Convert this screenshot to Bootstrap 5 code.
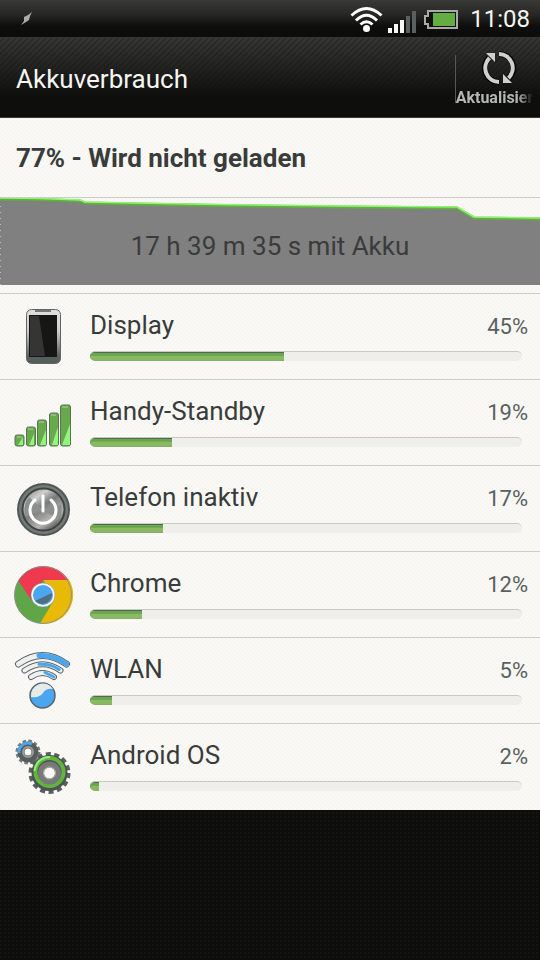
<!DOCTYPE html>
<html lang="de">
<head>
<meta charset="utf-8">
<meta name="viewport" content="width=device-width, initial-scale=1">
<title>Akkuverbrauch</title>
<link rel="stylesheet" href="https://cdn.jsdelivr.net/npm/bootstrap@5.3.0/dist/css/bootstrap.min.css">
<style>
body{font-family:Roboto,"Liberation Sans",sans-serif;color:#393c3b;font-size:26px;line-height:32px;
 background:radial-gradient(circle at 1px 1px,#141413 1px,transparent 1px) 0 0/4px 4px,#0d0d0c}
.statusbar{height:38px;padding:0 10px 0 20px;color:#f6f6f2;background:linear-gradient(#393938,#262625 40%,#0e0e0d 70%,#0c0c0b);border-bottom:1px solid #343433}
.clock{font-size:24px;margin-left:12px}
.titlebar{height:80px;padding:2px 8px 0 16px;color:#f6f6f2;border-bottom:1px solid #3a3a39;
 background:linear-gradient(transparent,#0e0e0d 75%),linear-gradient(135deg,#373736 25%,#2e2e2d 25% 50%,#373736 50% 75%,#2e2e2d 75%) 0 0/6px 6px}
.heading{font-size:26px;line-height:32px}
.refresh{width:77px;height:58px;font-size:16px;line-height:20px;font-weight:700;color:#b5b7b6;border:0;padding:0 0 0 2px;background:linear-gradient(#555857,#555857) 0 center/1px 48px no-repeat}
.refresh svg{flex:none;margin-left:8px}
.fade-end{-webkit-mask-image:linear-gradient(90deg,#000 80%,transparent);mask-image:linear-gradient(90deg,#000 80%,transparent)}
.paper{background:linear-gradient(135deg,#fbfaf7 25%,#f6f5f1 25% 50%,#fbfaf7 50% 75%,#f6f5f1 75%) 0 0/4px 4px}
.line{border-bottom:1px solid #cccdc9}
.summary{padding:24px 16px 23px}
.history{height:96px;padding-bottom:8px}
.usage{height:86px;background:none;color:inherit;border:0;border-bottom:1px solid #cccdc9;padding:0 12px 0 0}
.pic{width:90px;flex:none;padding:0 0 0 12px}
.share{font-size:22px;line-height:36px;color:#5a605f}
.meter{height:10px;margin:6px 6px 0 0;border-radius:5px;background:#eeefeb;border-top:1px solid #c8cac6}
.meter .progress-bar{background:linear-gradient(#67a84a 0 30%,#8ab864 40% 90%,#7c9c6c);border-top:1px solid #56645c;border-left:1px solid #62965a}
.names{padding-top:15px}
</style>
</head>
<body>
<header>
<div class="statusbar d-flex align-items-center">
 <svg width="14" height="14" viewBox="0 0 14 14" class="me-auto" aria-hidden="true"><path d="M12 0 8 3 4 5 4 9 1 13 6 10 9 8 10 4Z" fill="#a9adad"/></svg>
 <svg width="112" height="38" viewBox="346 0 112 38" aria-hidden="true">
  <g fill="none" stroke="#fff" stroke-width="3"><path d="M351.500 15.500Q366.500 1.500 381.500 15.500"/><path d="M356 20.500Q366.500 10 377 20.500"/><path d="M360.500 24.500Q366.500 19 372.500 24.500"/></g><circle cx="366.500" cy="28.500" r="3.500" fill="#fff"/>
  <path fill="#f8f8f6" d="M388 28h4v5h-4zM394 24h4v9h-4zM400 20h4v13h-4z"/><path fill="#596160" d="M406 16h4v17h-4zM412 11h4v22h-4z"/>
  <path d="M428 11H457V28H428V24H425V16H428Z" fill="#111" stroke="#a9abaa" stroke-width="2"/><path d="M433 13h22v13h-22z" fill="#64ad43"/>
 </svg>
 <time class="clock">11:08</time>
</div>
<div class="titlebar d-flex align-items-center justify-content-between">
 <h1 class="heading m-0 fw-normal">Akkuverbrauch</h1>
 <button type="button" class="refresh d-flex flex-column align-items-center justify-content-between" aria-label="Aktualisieren">
  <svg width="36" height="36" viewBox="0 0 36 36" aria-hidden="true"><g fill="none" stroke="#050505" stroke-width="6"><path d="M18 4A14 14 0 0 1 28 28M18 32A14 14 0 0 1 8 8"/></g><g fill="none" stroke="#d0d1ce" stroke-width="4"><path d="M18 4A14 14 0 0 1 27.500 28M18 32A14 14 0 0 1 8.500 8"/></g><path d="M5 3H14V12ZM31 33H22V24Z" fill="#d0d1ce"/></svg>
  <span class="fade-end">Aktualisier</span>
 </button>
</div>
</header>
<main class="paper">
<h2 class="heading summary line m-0 fw-bold">77% - Wird nicht geladen</h2>
<section class="history line position-relative">
 <svg class="d-block w-100 h-100" viewBox="0 0 540 87" preserveAspectRatio="none" aria-hidden="true">
  <path d="M0 1.500 40 2 80 3 85 5 135 6.500 220 8 347 9.500 457 10.500 474 20 540 22V87H0Z" fill="#808080"/>
  <path d="M0 1 40 1.500 80 3 85 5 135 6 220 7.500 347 9 457 10 474 20 540 21" fill="none" stroke="#62ae40" stroke-width="3"/>
  <path d="M0 0 40 .5 80 2 85 4 135 5 220 6.500 347 8 457 9 474 19 540 20" fill="none" stroke="#90f574" stroke-width="1.500"/>
  <path d="M.5 8V87" stroke="#bbb" stroke-dasharray="1 5"/>
 </svg>
 <div class="position-absolute top-0 bottom-0 start-0 end-0 d-flex align-items-center justify-content-center">17 h 39 m 35 s mit Akku</div>
</section>
<ul class="list-group list-group-flush">
<li class="list-group-item usage d-flex"><div class="pic d-flex align-items-center">
<svg width="62" height="62" viewBox="0 0 62 62" aria-hidden="true"><defs><linearGradient id="shell" x2="0" y2="1"><stop stop-color="#e0e0de"/><stop offset=".4" stop-color="#d0d0ce"/><stop offset=".85" stop-color="#5b6362"/><stop offset="1" stop-color="#535b59"/></linearGradient></defs><rect x="14.500" y="3.500" width="34" height="54" rx="5" fill="url(#shell)" stroke="#606664"/><path d="M23 5h16" stroke="#777" stroke-width="2"/><path d="M17 9h28v42H17z" fill="#161615"/><path d="M18 10h9l6 40H18z" fill="#343534"/></svg></div>
<div class="flex-fill names"><div class="d-flex justify-content-between"><span>Display</span><span class="share">45%</span></div><div class="progress meter" role="progressbar" aria-label="Display" aria-valuenow="45" aria-valuemin="0" aria-valuemax="100"><div class="progress-bar" style="width:45%"></div></div></div></li>
<li class="list-group-item usage d-flex"><div class="pic d-flex align-items-center">
<svg width="62" height="62" viewBox="0 0 62 62" aria-hidden="true"><g fill="#68a94c" stroke="#59725a"><rect x="3" y="43" width="9" height="11" rx="2"/><rect x="14.500" y="35" width="9" height="19" rx="2"/><rect x="25.500" y="28" width="9" height="26" rx="2"/><rect x="37.500" y="21" width="9" height="33" rx="2"/><rect x="48.500" y="13" width="10" height="41" rx="2"/></g><path d="M6 53 11 45V53ZM17 53 22 42V53ZM28 53 34 38V53ZM40 53 46 35V53ZM50 53 58 32V53Z" fill="#92f67a"/><path d="M5 45h5M16 37h5M27 30h5M39 23h5M50 15h6" stroke="#93b975" stroke-width="2"/></svg></div>
<div class="flex-fill names"><div class="d-flex justify-content-between"><span>Handy-Standby</span><span class="share">19%</span></div><div class="progress meter" role="progressbar" aria-label="Handy-Standby" aria-valuenow="19" aria-valuemin="0" aria-valuemax="100"><div class="progress-bar" style="width:19%"></div></div></div></li>
<li class="list-group-item usage d-flex"><div class="pic d-flex align-items-center">
<svg width="62" height="62" viewBox="0 0 62 62" aria-hidden="true"><defs><linearGradient id="metal" x2=".7" y2="1"><stop stop-color="#696e6c"/><stop offset=".3" stop-color="#d0d0cd"/><stop offset=".5" stop-color="#777a79"/><stop offset=".8" stop-color="#b5b5b2"/><stop offset="1" stop-color="#555"/></linearGradient></defs><circle cx="31.500" cy="31.500" r="25.500" fill="#747a79" stroke="#505957" stroke-width="2"/><circle cx="31.500" cy="31.500" r="21" fill="url(#metal)" stroke="#3f4342" stroke-width="2"/><path d="M31 32 17 19A20 20 0 0 0 14 39ZM31 32 49 27A20 20 0 0 1 47 42Z" fill="#8c8f8e"/><path d="M23 22A13 13 0 1 0 39 22M31 18V33" fill="none" stroke="#fff" stroke-width="3" stroke-linecap="round"/></svg></div>
<div class="flex-fill names"><div class="d-flex justify-content-between"><span>Telefon inaktiv</span><span class="share">17%</span></div><div class="progress meter" role="progressbar" aria-label="Telefon inaktiv" aria-valuenow="17" aria-valuemin="0" aria-valuemax="100"><div class="progress-bar" style="width:17%"></div></div></div></li>
<li class="list-group-item usage d-flex"><div class="pic d-flex align-items-center">
<svg width="62" height="62" viewBox="0 0 62 62" aria-hidden="true"><circle cx="31" cy="31" r="28.500" fill="#60a547"/><path d="M31 15H56.500A29 29 0 0 1 28 59.500L42 36Z" fill="#e8b907"/><path d="M6.500 17 20 37 31 16H56.500A29 29 0 0 0 6.500 17Z" fill="#f0384f"/><circle cx="31" cy="31" r="28.500" fill="none" stroke="#8d938b"/><circle cx="31" cy="31" r="12" fill="#fafafa" stroke="#778899" stroke-width=".5"/><circle cx="31" cy="31" r="10" fill="#4aa6ee"/><path d="M23 37 40 29A10 10 0 0 1 23 37Z" fill="#526c80"/></svg></div>
<div class="flex-fill names"><div class="d-flex justify-content-between"><span>Chrome</span><span class="share">12%</span></div><div class="progress meter" role="progressbar" aria-label="Chrome" aria-valuenow="12" aria-valuemin="0" aria-valuemax="100"><div class="progress-bar" style="width:12%"></div></div></div></li>
<li class="list-group-item usage d-flex"><div class="pic d-flex align-items-center">
<svg width="62" height="62" viewBox="0 0 62 62" aria-hidden="true"><g fill="none" stroke-linecap="round"><path d="M6.500 14Q30.500-3 54.500 14" stroke="#59656a" stroke-width="7"/><path d="M6.500 14Q30.500-3 54.500 14" stroke="#eef0ed" stroke-width="5"/><path d="M27 5.600Q42 5 54.500 14" stroke="#4aa6ee" stroke-width="5"/><path d="M12.500 20.500Q30.500 8 48.500 20.500M19 27Q30.500 19 42 27" stroke="#59656a" stroke-width="6"/><path d="M12.500 20.500Q30.500 8 48.500 20.500M19 27Q30.500 19 42 27" stroke="#eef0ed" stroke-width="4"/><path d="M27 14.300Q39 13.500 47 19.500M33 22.500 42 27" stroke="#4aa6ee" stroke-width="3"/></g><circle cx="30.500" cy="45.500" r="12.500" fill="#4aa6ee" stroke="#59656a" stroke-width="1.500"/><path d="M19 47A12 12 0 0 1 41 39Q34 38 31 43T19 47Z" fill="#e6ebe9"/></svg></div>
<div class="flex-fill names"><div class="d-flex justify-content-between"><span>WLAN</span><span class="share">5%</span></div><div class="progress meter" role="progressbar" aria-label="WLAN" aria-valuenow="5" aria-valuemin="0" aria-valuemax="100"><div class="progress-bar" style="width:5%"></div></div></div></li>
<li class="list-group-item usage d-flex"><div class="pic d-flex align-items-center">
<svg width="62" height="62" viewBox="0 0 62 62" aria-hidden="true"><g fill="none"><circle cx="16" cy="16" r="11" stroke="#777d7b" stroke-width="3" stroke-dasharray="3.500 2.260"/><circle cx="16" cy="16" r="7" stroke="#565e5d" stroke-width="7"/><path d="M7 17A9 9 0 0 1 20 8" stroke="#4aa6ee" stroke-width="3"/><circle cx="16" cy="16" r="5" stroke="#989c9a" stroke-width="2"/><circle cx="37.500" cy="37" r="19" stroke="#59605f" stroke-width="4" stroke-dasharray="5 3.527"/><circle cx="37.500" cy="37" r="12" stroke="#4d5352" stroke-width="12"/><circle cx="37.500" cy="36" r="14" stroke="#62b43e" stroke-width="4"/><path d="M22.500 35A15 15 0 0 1 38 21" stroke="#90f574" stroke-width="2"/><circle cx="37.500" cy="37" r="8.500" stroke="#777a79" stroke-width="6"/><circle cx="37.500" cy="37" r="6" stroke="#b0b1ae" stroke-width="1"/></g></svg></div>
<div class="flex-fill names"><div class="d-flex justify-content-between"><span>Android OS</span><span class="share">2%</span></div><div class="progress meter" role="progressbar" aria-label="Android OS" aria-valuenow="2" aria-valuemin="0" aria-valuemax="100"><div class="progress-bar" style="width:2%"></div></div></div></li>
</ul>
</main>
<script src="https://cdn.jsdelivr.net/npm/bootstrap@5.3.0/dist/js/bootstrap.bundle.min.js"></script>
</body>
</html>
